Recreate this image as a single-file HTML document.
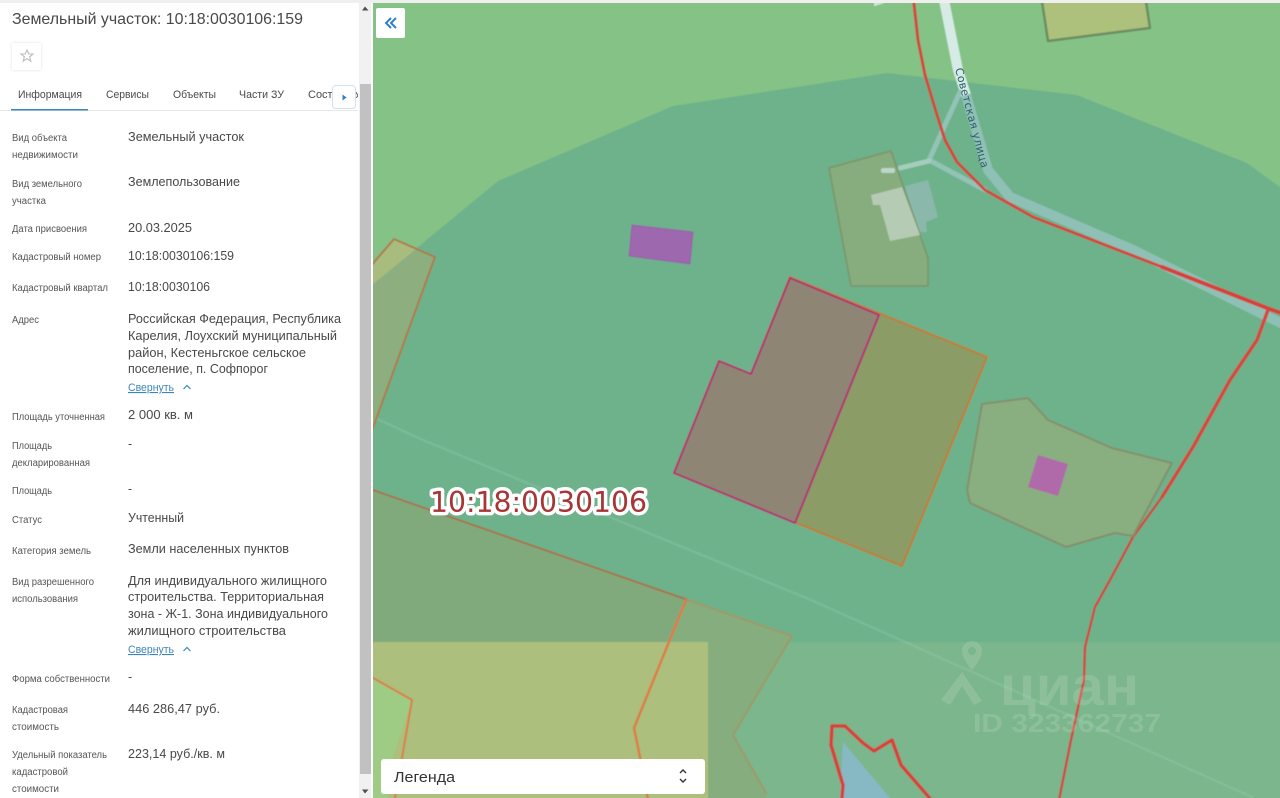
<!DOCTYPE html>
<html lang="ru">
<head>
<meta charset="utf-8">
<title>Земельный участок</title>
<style>
html,body{margin:0;padding:0;width:1280px;height:798px;overflow:hidden;background:#fff}
svg{display:block;position:absolute;left:0;top:0}
.t{font-family:"Liberation Sans",sans-serif}
.l{font-size:10px;fill:#555}
.v{font-size:12.5px;fill:#484848}
.tab{font-size:11px;fill:#4a4a4a}
.lnk{font-size:11px;fill:#3a86b8;text-decoration:underline}
</style>
</head>
<body>
<svg width="1280" height="798" viewBox="0 0 1280 798" xmlns="http://www.w3.org/2000/svg">
<defs>
<clipPath id="m"><rect x="373" y="3" width="907" height="795"/></clipPath>
<clipPath id="tc"><rect x="0" y="80" width="358" height="30"/></clipPath>
<filter id="b" x="-5%" y="-5%" width="110%" height="110%"><feGaussianBlur stdDeviation="0.35"/></filter>
<filter id="mb" filterUnits="userSpaceOnUse" x="340" y="-20" width="960" height="840"><feGaussianBlur stdDeviation="0.6"/></filter>
<filter id="sh" x="-30%" y="-30%" width="160%" height="160%"><feDropShadow dx="0" dy="0" stdDeviation="1.5" flood-color="#000" flood-opacity=".12"/></filter>
</defs>
<rect width="1280" height="798" fill="#fff"/>
<rect width="1280" height="3" fill="#efefef"/>

<g clip-path="url(#m)">
<g filter="url(#mb)" stroke-linejoin="round" stroke-linecap="round">
<rect x="350" y="-15" width="945" height="830" fill="#85c285"/>
<!-- dark zone -->
<polygon points="350,303 498,181 673,106 803,86 887,73 1077,95 1247,163 1295,198 1295,815 350,815" fill="#6db28b"/>
<rect x="350" y="642" width="945" height="173" fill="#7bb68c"/>
<!-- thin road -->
<polyline points="373,417 423,440 811,600 1252,797" fill="none" stroke="#a6d6c6" stroke-opacity=".22" stroke-width="2.500"/>
<!-- top yellow parcel -->
<polygon points="1041,-5 1048,41 1150,28 1145,-5" fill="#adc07c" stroke="#6b8e62" stroke-width="2.500"/>
<polygon points="874,6 885,3 874,3" fill="#d8ebe0"/>
<!-- roads -->
<polyline points="943,-5 958,70 966,95" fill="none" stroke="#d6ebe6" stroke-width="10" stroke-linecap="butt"/>
<polyline points="966,95 988,170 1010,197 1133,250 1295,330" fill="none" stroke="#8fc0b5" stroke-width="10" stroke-linecap="butt"/>
<polyline points="960,92 929,160 985,190" fill="none" stroke="#93c3b6" stroke-width="5"/>
<polyline points="929,161 900,168" fill="none" stroke="#a5cdbd" stroke-width="5"/>
<!-- buildings + north parcel -->
<polygon points="905,186 928,180 938,217 926,222 927,232 915,232" fill="#8ab8aa"/>
<polygon points="829,168 891,151 928,258 928,286 851,286" fill="#87ad7e" stroke="#7b9a6e" stroke-width="2"/>
<polygon points="871,195 902,187 920,235 890,241 880,205 873,205" fill="#b5cbb4"/>
<rect x="881" y="168" width="14" height="5" rx="2" fill="#bcd6c8"/>
<!-- red boundary -->
<polyline points="913,-5 918,40 925,75 937,115 945,140 957,162 985,190 1033,217 1162,267" fill="none" stroke="#d3473e" stroke-width="3"/>
<polyline points="1162,267 1267,308 1295,318" fill="none" stroke="#d8403a" stroke-width="4"/>
<polyline points="1268,310 1257,340 1230,380 1193,447 1162,497" fill="none" stroke="#d8453e" stroke-width="3.500"/>
<polyline points="1162,497 1133,537 1110,580 1095,607 1085,647 1084,680 1071,740 1057,810" fill="none" stroke="#cf4a43" stroke-width="2.500"/>
<!-- purple building -->
<polygon points="632,225 693,232 690,264 629,256" fill="#9d68ad" stroke="#9560a8" stroke-width="1"/>
<!-- west parcel -->
<polygon points="350,290 394,239 435,257 350,490" fill="#a8bc7e"/>
<polygon points="350,303 416,249 435,257 350,490" fill="#8dae7e"/>
<polyline points="350,290 394,239 435,257 370,436" fill="none" stroke="#ae7a4c" stroke-width="2"/>
<!-- big main parcel -->
<polygon points="790,277 987,357 902,566 674,473 719,361 751,374" fill="#8b9c66" stroke="#c47b34" stroke-width="2"/>
<polygon points="790,278 879,315 795,523 674,473 719,361 751,374" fill="#8f8574" stroke="#b32f72" stroke-width="2"/>
<!-- east parcel -->
<polygon points="982,404 1028,398 1048,420 1112,448 1172,463 1133,536 1115,533 1066,547 970,503 967,490" fill="#89ae80" stroke="#84906a" stroke-width="2"/>
<polygon points="1038,455 1068,464 1058,496 1028,487" fill="#b06aa9"/>
<!-- south west parcels -->
<polygon points="350,482 688,600 792,636 733,735 766,793 770,815 350,815" fill="#81aa7c"/>
<rect x="350" y="642" width="358" height="173" fill="#acbf7b"/>
<polygon points="708,642 792,636 733,735 766,793 770,815 708,815" fill="#86ad7e"/>
<polygon points="688,600 792,636 780,642 669,642" fill="#86ad7e"/>
<polyline points="350,482 688,600" fill="none" stroke="#a6744f" stroke-width="2"/>
<polyline points="688,600 792,636 733,735 766,793" fill="none" stroke="#9e9a68" stroke-width="2"/>
<polyline points="686,600 634,728 640,757 650,810" fill="none" stroke="#dd7c45" stroke-width="2.500"/>
<polygon points="350,665 412,700 393,757 385,815 350,815" fill="#9fcc84"/>
<polyline points="350,665 412,700 393,810" fill="none" stroke="#dd7c45" stroke-width="2"/>
<!-- water + red blob -->
<polygon points="843,742 900,810 839,810" fill="#86b9c4"/>
<polyline points="841,810 843,785 831,745 832,726 845,726 863,743 874,751 892,740 901,765 940,810" fill="none" stroke="#d8403a" stroke-width="3.500"/>
</g>
<!-- watermark -->
<g fill="#fff" fill-opacity=".13">
<path d="M972 641a10 10 0 0 0-10 10c0 8 10 19 10 19s10-11 10-19a10 10 0 0 0-10-10zm0 6a4 4 0 1 1 0 8 4 4 0 0 1 0-8z" fill-rule="evenodd"/>
<polygon points="962,672 982,701 974,705 962,686 950,705 941,700"/>
<text class="t" x="1000" y="705" font-size="56" font-weight="bold" textLength="139" lengthAdjust="spacingAndGlyphs">циан</text>
<text class="t" x="973" y="732" font-size="26" font-weight="bold" textLength="188" lengthAdjust="spacingAndGlyphs">ID 323362737</text>
</g>
<!-- street label -->
<text x="0" y="0" transform="translate(955,69) rotate(75)" font-family="'DejaVu Sans',sans-serif" font-size="11" fill="#2f5f6a" textLength="103" lengthAdjust="spacing">Советская улица</text>
<!-- quarter label -->
<g filter="url(#b)">
<text x="430" y="512" font-family="'DejaVu Sans',sans-serif" font-size="28.4" fill="#fff" stroke="#fff" stroke-width="7" stroke-linejoin="round" textLength="217" lengthAdjust="spacingAndGlyphs">10:18:0030106</text>
<text x="430" y="512" font-family="'DejaVu Sans',sans-serif" font-size="28.4" fill="#a83434" textLength="217" lengthAdjust="spacingAndGlyphs">10:18:0030106</text>
</g>
</g>

<!-- map back button -->
<rect x="376" y="8" width="29" height="30" rx="2" fill="#fff"/>
<path d="M391 18l-5 5 5 5M396 18l-5 5 5 5" fill="none" stroke="#2f80c8" stroke-width="2"/>
<!-- legend -->
<rect x="381" y="759" width="324" height="35" rx="3" fill="#fff"/>
<text class="t" x="394" y="782" font-size="15" fill="#333" textLength="61" lengthAdjust="spacingAndGlyphs">Легенда</text>
<path d="M680 773l3-3 3 3M680 779l3 3 3-3" fill="none" stroke="#333" stroke-width="1.400"/>

<!-- scrollbar -->
<rect x="359" y="3" width="12" height="795" fill="#f1f1f1"/>
<rect x="360" y="84" width="11" height="690" fill="#c1c1c1"/>
<polygon points="365,6.500 362,10.500 368.500,10.500" fill="#505050"/>
<polygon points="362,789.500 368.500,789.500 365,793.500" fill="#505050"/>

<g filter="url(#b)">
<text class="t" x="12" y="24" font-size="16" fill="#484848" textLength="291" lengthAdjust="spacingAndGlyphs">Земельный участок: 10:18:0030106:159</text>
<rect x="12" y="43" width="29" height="27" rx="2" fill="#fff" filter="url(#sh)"/>
<path d="M27 50l1.800 4h4.200l-3.400 2.800 1.200 4.400-3.800-2.500-3.800 2.500 1.200-4.400-3.400-2.800h4.200z" fill="none" stroke="#bdbdbd" stroke-width="1.100"/>

<text class="t tab" x="18" y="98" textLength="64" lengthAdjust="spacingAndGlyphs">Информация</text>
<text class="t tab" x="106" y="98" textLength="43" lengthAdjust="spacingAndGlyphs">Сервисы</text>
<text class="t tab" x="173" y="98" textLength="43" lengthAdjust="spacingAndGlyphs">Объекты</text>
<text class="t tab" x="239" y="98" textLength="45" lengthAdjust="spacingAndGlyphs">Части ЗУ</text>
<g clip-path="url(#tc)"><text class="t tab" x="308" y="98" textLength="53" lengthAdjust="spacingAndGlyphs">Состав ЗУ</text></g>
<rect x="0" y="110" width="358" height="1" fill="#e8e8e8"/>
<rect x="11" y="109" width="77" height="1.500" fill="#3a86b8"/>
<rect x="332.500" y="85.500" width="23" height="23" rx="3" fill="#fff" stroke="#d3e2ee"/>
<polygon points="342.500,94.500 346.500,97.500 342.500,100.500" fill="#2f80c8"/>

<text class="t l" x="12" y="141" textLength="55" lengthAdjust="spacingAndGlyphs">Вид объекта</text>
<text class="t l" x="12" y="158" textLength="66" lengthAdjust="spacingAndGlyphs">недвижимости</text>
<text class="t l" x="12" y="187" textLength="70" lengthAdjust="spacingAndGlyphs">Вид земельного</text>
<text class="t l" x="12" y="204" textLength="34" lengthAdjust="spacingAndGlyphs">участка</text>
<text class="t l" x="12" y="232" textLength="75" lengthAdjust="spacingAndGlyphs">Дата присвоения</text>
<text class="t l" x="12" y="260" textLength="89" lengthAdjust="spacingAndGlyphs">Кадастровый номер</text>
<text class="t l" x="12" y="291" textLength="96" lengthAdjust="spacingAndGlyphs">Кадастровый квартал</text>
<text class="t l" x="12" y="323" textLength="27" lengthAdjust="spacingAndGlyphs">Адрес</text>
<text class="t l" x="12" y="420" textLength="93" lengthAdjust="spacingAndGlyphs">Площадь уточненная</text>
<text class="t l" x="12" y="449" textLength="40" lengthAdjust="spacingAndGlyphs">Площадь</text>
<text class="t l" x="12" y="466" textLength="78" lengthAdjust="spacingAndGlyphs">декларированная</text>
<text class="t l" x="12" y="494" textLength="40" lengthAdjust="spacingAndGlyphs">Площадь</text>
<text class="t l" x="12" y="523" textLength="30" lengthAdjust="spacingAndGlyphs">Статус</text>
<text class="t l" x="12" y="554" textLength="79" lengthAdjust="spacingAndGlyphs">Категория земель</text>
<text class="t l" x="12" y="585" textLength="82" lengthAdjust="spacingAndGlyphs">Вид разрешенного</text>
<text class="t l" x="12" y="602" textLength="66" lengthAdjust="spacingAndGlyphs">использования</text>
<text class="t l" x="12" y="682" textLength="98" lengthAdjust="spacingAndGlyphs">Форма собственности</text>
<text class="t l" x="12" y="713" textLength="56" lengthAdjust="spacingAndGlyphs">Кадастровая</text>
<text class="t l" x="12" y="730" textLength="47" lengthAdjust="spacingAndGlyphs">стоимость</text>
<text class="t l" x="12" y="758" textLength="95" lengthAdjust="spacingAndGlyphs">Удельный показатель</text>
<text class="t l" x="12" y="775" textLength="56" lengthAdjust="spacingAndGlyphs">кадастровой</text>
<text class="t l" x="12" y="792" textLength="47" lengthAdjust="spacingAndGlyphs">стоимости</text>

<text class="t v" x="128" y="141" textLength="116" lengthAdjust="spacingAndGlyphs">Земельный участок</text>
<text class="t v" x="128" y="186" textLength="112" lengthAdjust="spacingAndGlyphs">Землепользование</text>
<text class="t v" x="128" y="232" textLength="64" lengthAdjust="spacingAndGlyphs">20.03.2025</text>
<text class="t v" x="128" y="260" textLength="106" lengthAdjust="spacingAndGlyphs">10:18:0030106:159</text>
<text class="t v" x="128" y="291" textLength="82" lengthAdjust="spacingAndGlyphs">10:18:0030106</text>
<text class="t v" x="128" y="323" textLength="213" lengthAdjust="spacingAndGlyphs">Российская Федерация, Республика</text>
<text class="t v" x="128" y="340" textLength="209" lengthAdjust="spacingAndGlyphs">Карелия, Лоухский муниципальный</text>
<text class="t v" x="128" y="357" textLength="178" lengthAdjust="spacingAndGlyphs">район, Кестеньгское сельское</text>
<text class="t v" x="128" y="373" textLength="140" lengthAdjust="spacingAndGlyphs">поселение, п. Софпорог</text>
<text class="t lnk" x="128" y="391" textLength="46" lengthAdjust="spacingAndGlyphs">Свернуть</text>
<path d="M183.500 389l3.500-3.500 3.500 3.500" fill="none" stroke="#3a86b8" stroke-width="1.200"/>
<text class="t v" x="128" y="419" textLength="65" lengthAdjust="spacingAndGlyphs">2 000 кв. м</text>
<text class="t v" x="128" y="448">-</text>
<text class="t v" x="128" y="493">-</text>
<text class="t v" x="128" y="522" textLength="56" lengthAdjust="spacingAndGlyphs">Учтенный</text>
<text class="t v" x="128" y="553" textLength="161" lengthAdjust="spacingAndGlyphs">Земли населенных пунктов</text>
<text class="t v" x="128" y="585" textLength="199" lengthAdjust="spacingAndGlyphs">Для индивидуального жилищного</text>
<text class="t v" x="128" y="601" textLength="196" lengthAdjust="spacingAndGlyphs">строительства. Территориальная</text>
<text class="t v" x="128" y="618" textLength="200" lengthAdjust="spacingAndGlyphs">зона - Ж-1. Зона индивидуального</text>
<text class="t v" x="128" y="635" textLength="158" lengthAdjust="spacingAndGlyphs">жилищного строительства</text>
<text class="t lnk" x="128" y="653" textLength="46" lengthAdjust="spacingAndGlyphs">Свернуть</text>
<path d="M183.500 651l3.500-3.500 3.500 3.500" fill="none" stroke="#3a86b8" stroke-width="1.200"/>
<text class="t v" x="128" y="681">-</text>
<text class="t v" x="128" y="713" textLength="92" lengthAdjust="spacingAndGlyphs">446 286,47 руб.</text>
<text class="t v" x="128" y="758" textLength="97" lengthAdjust="spacingAndGlyphs">223,14 руб./кв. м</text>
</g>
</svg>
</body>
</html>
